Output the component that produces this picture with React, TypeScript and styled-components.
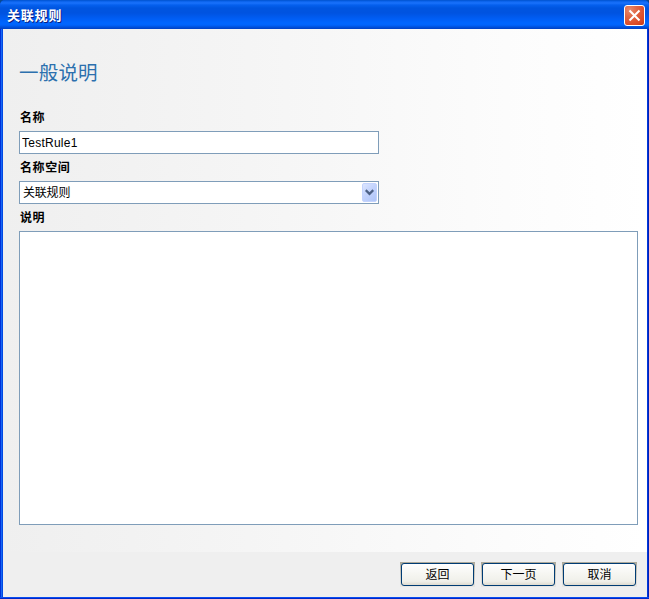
import React from 'react';
import styled, { createGlobalStyle } from 'styled-components';

const GlobalStyle = createGlobalStyle`
  * { box-sizing: border-box; }
  html, body { margin: 0; padding: 0; }
  body { background: #0a4a90; overflow: hidden; }
  button, input, textarea { font: inherit; margin: 0; border-radius: 0; outline: none; }
`;

const Dialog = styled.div`
  width: 649px;
  height: 599px;
  display: flex;
  flex-direction: column;
  border-radius: 5px 5px 0 0;
  overflow: hidden;
  background: #0040d8;
  color: #000;
  font-family: "Liberation Sans", "Noto Sans CJK SC", sans-serif;
  font-size: 12px;
`;

const TitleBar = styled.header`
  height: 29px;
  flex: none;
  display: flex;
  align-items: center;
  justify-content: space-between;
  padding: 1px 4px 0 7px;
  background: linear-gradient(
    #0050c8 0, #0860e8 1px, #1a72fc 3px, #0560ee 5px, #0055e0 8px,
    #0053e0 13px, #005cf2 18px, #0066ff 23px, #0064fc 25px, #0052de 27px, #0040c2 29px
  );
`;

const Title = styled.h1`
  margin: 0;
  padding-top: 1px;
  color: #fff;
  font-size: 13px;
  line-height: 20px;
  font-weight: 700;
  letter-spacing: 0.8px;
  text-shadow: 1px 1px 0 #0a1f80;
`;

const CloseButton = styled.button`
  width: 21px;
  height: 21px;
  padding: 0;
  display: grid;
  place-items: center;
  border: 1px solid #fff;
  border-radius: 3px;
  background: radial-gradient(circle at 25% 20%, #e88a6c 0, #e06645 35%, #da4a26 75%, #c23a16 100%);
`;

const Body = styled.div`
  flex: 1;
  min-height: 0;
  display: flex;
  flex-direction: column;
  padding: 0 2px 2px 3px;
  background:
    linear-gradient(#0a4cf0 0 1px, #0028c8 1px 2px) left bottom / 100% 2px no-repeat,
    linear-gradient(90deg, #0030d8 0 1px, #1668f4 1px 2px, #0048e4 2px 3px) left top / 3px 100% no-repeat,
    linear-gradient(90deg, #0038dc 0 1px, #0020b8 1px 2px) right top / 2px 100% no-repeat;
`;

const Content = styled.main`
  height: 523px;
  flex: none;
  padding: 30px 9px 0 16px;
  display: flex;
  flex-direction: column;
  background: linear-gradient(90deg, #efefef 0, #f2f2f2 20%, #f7f7f7 50%, #fcfcfc 78%, #fff 100%);
`;

const Heading = styled.h2`
  margin: 0 0 21px;
  color: #2c70ae;
  font-size: 19.5px;
  line-height: 28px;
  font-weight: 400;
  letter-spacing: 0.2px;
`;

const Field = styled.div<{ $wide?: boolean }>`
  display: flex;
  flex-direction: column;
  width: ${(p) => (p.$wide ? '619px' : '360px')};
  margin-bottom: 4px;
`;

const Label = styled.label`
  height: 23px;
  padding-left: 1px;
  line-height: 21px;
  font-weight: 700;
  letter-spacing: 0.6px;
`;

const TextInput = styled.input`
  height: 23px;
  width: 100%;
  padding: 0 2px;
  border: 1px solid #7f9db9;
  background: #fff;
  color: #000;
  letter-spacing: 0.25px;
`;

const Select = styled.div`
  height: 23px;
  display: flex;
  align-items: center;
  justify-content: space-between;
  padding: 0 1px 0 3px;
  border: 1px solid #7f9db9;
  background: #fff;
  line-height: 20px;
  letter-spacing: -0.2px;
`;

const DropButton = styled.span`
  width: 15px;
  height: 19px;
  display: grid;
  place-items: center;
  border: 1px solid #c3d3fd;
  border-radius: 2px;
  background: linear-gradient(135deg, #dce6ff 0, #c3d3fc 45%, #afc5f8 100%);
`;

const TextArea = styled.textarea`
  display: block;
  width: 100%;
  height: 294px;
  padding: 2px;
  resize: none;
  border: 1px solid #7f9db9;
  background: #fff;
`;

const Footer = styled.footer`
  flex: 1;
  display: flex;
  justify-content: flex-end;
  align-items: flex-start;
  gap: 6px;
  padding: 10px 10px 0 0;
  background: #efefef;
`;

const ButtonEdge = styled.div`
  width: 75px;
  height: 25px;
  padding: 1px;
  background: linear-gradient(#aca899, #c6c4bc 40%, #e9e8e4);
`;

const PushButton = styled.button`
  display: block;
  width: 100%;
  height: 100%;
  padding: 0;
  border: 1px solid #003c74;
  border-radius: 3px;
  background: linear-gradient(#fff 0, #f6f6f2 45%, #f0f0ea 82%, #dedbd0 100%);
  color: #000;
  font-size: 12px;
  line-height: 20px;
`;

const buttons = ['返回', '下一页', '取消'];

export default function App() {
  return (
    <>
      <GlobalStyle />
      <Dialog>
        <TitleBar>
          <Title>关联规则</Title>
          <CloseButton aria-label="关闭">
            <svg width="13" height="13" viewBox="0 0 13 13">
              <path d="M1.5 1.5 11.5 11.5M11.5 1.5 1.5 11.5" stroke="#fff" strokeWidth="2.1" fill="none" />
            </svg>
          </CloseButton>
        </TitleBar>
        <Body>
          <Content>
            <Heading>一般说明</Heading>
            <Field>
              <Label htmlFor="name">名称</Label>
              <TextInput id="name" defaultValue="TestRule1" />
            </Field>
            <Field>
              <Label>名称空间</Label>
              <Select role="combobox">
                <span>关联规则</span>
                <DropButton>
                  <svg width="9" height="7" viewBox="0 0 9 7">
                    <path d="M.7 1.2 4.5 4.8 8.3 1.2" stroke="#4d6185" strokeWidth="2.3" fill="none" />
                  </svg>
                </DropButton>
              </Select>
            </Field>
            <Field $wide>
              <Label htmlFor="description">说明</Label>
              <TextArea id="description" />
            </Field>
          </Content>
          <Footer>
            {buttons.map((text) => (
              <ButtonEdge key={text}>
                <PushButton>{text}</PushButton>
              </ButtonEdge>
            ))}
          </Footer>
        </Body>
      </Dialog>
    </>
  );
}
